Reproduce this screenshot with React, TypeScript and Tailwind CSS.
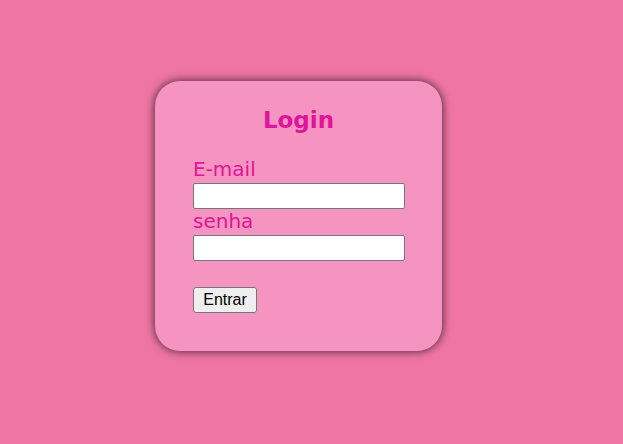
const Login = () => {
    return (
        <section className="w-full h-[444px] bg-[#ef75a5] pl-[155px] pt-[81px]">
            <div className="w-[287px] h-[270px] bg-[#f594c0] rounded-[25px] shadow-[0_0_10px_rgba(0,0,0,0.75)] flex flex-col px-[38px] pt-[26px] font-['DejaVu_Sans',sans-serif] text-[#e0139a]">
                <h1 className="text-center text-[23px] font-bold leading-[26px]">Login</h1>
                {/*FORM*/}
                <form className="flex flex-col mt-[25px]">
                    <label className="text-[20px] leading-[23px]">E-mail</label>
                    <input type="text" className="mt-[2px] w-[212px] h-[26px] bg-white border border-[#767676] rounded-[2px]"/>
                    <label className="text-[20px] leading-[23px] mt-[1px]">senha</label>
                    <input type="password" className="mt-[2px] w-[212px] h-[26px] bg-white border border-[#767676] rounded-[2px]"/>
                    <button type="button"
                            className="mt-[26px] w-[64px] h-[26px] bg-[#efefef] border border-[#767676] rounded-[3px] text-black text-[16px] font-['Liberation_Sans',sans-serif]">
                        Entrar
                    </button>
                </form>
            </div>
        </section>
    );
};

export default function App() {
    return <Login/>;
}
